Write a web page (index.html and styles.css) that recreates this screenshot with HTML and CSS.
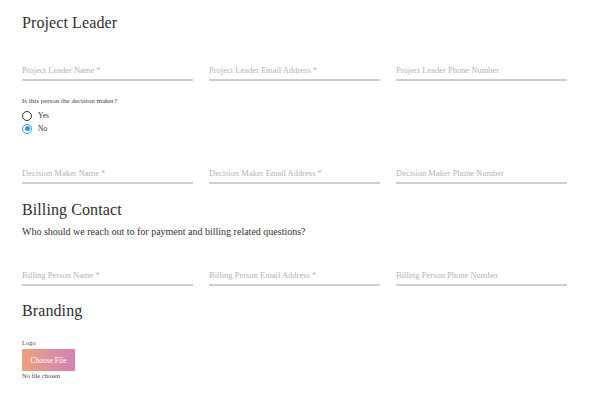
FILE: index.html
```html
<!DOCTYPE html>
<html lang="en">
<head>
<meta charset="utf-8">
<title>Project Form</title>
<link rel="stylesheet" href="styles.css">
</head>
<body>
<main class="page">
  <h2 class="section-title first">Project Leader</h2>
  <div class="field-row row-leader">
    <input class="field" type="text" placeholder="Project Leader Name *">
    <input class="field" type="email" placeholder="Project Leader Email Address *">
    <input class="field" type="tel" placeholder="Project Leader Phone Number">
  </div>
  <div class="question">
    <p class="question-label">Is this person the decision maker?</p>
    <label class="radio"><span class="radio-dot"></span>Yes</label>
    <label class="radio is-checked"><span class="radio-dot"></span>No</label>
  </div>
  <div class="field-row row-decision">
    <input class="field" type="text" placeholder="Decision Maker Name *">
    <input class="field" type="email" placeholder="Decision Maker Email Address *">
    <input class="field" type="tel" placeholder="Decision Maker Phone Number">
  </div>
  <h2 class="section-title billing">Billing Contact</h2>
  <p class="lead">Who should we reach out to for payment and billing related questions?</p>
  <div class="field-row row-billing">
    <input class="field" type="text" placeholder="Billing Person Name *">
    <input class="field" type="email" placeholder="Billing Person Email Address *">
    <input class="field" type="tel" placeholder="Billing Person Phone Number">
  </div>
  <h2 class="section-title branding">Branding</h2>
  <div class="upload">
    <span class="upload-label">Logo</span>
    <button class="file-btn" type="button">Choose File</button>
    <span class="file-status">No file chosen</span>
  </div>
</main>
</body>
</html>
```

FILE: styles.css
```css
html, body {
  margin: 0;
  padding: 0;
  background: #ffffff;
}

body {
  font-family: "Liberation Serif", "DejaVu Serif", serif;
  color: #333333;
}

.page {
  padding: 0 22px;
  display: flex;
  flex-direction: column;
  align-items: flex-start;
}

.section-title {
  margin: 0;
  font-size: 16px;
  font-weight: normal;
  line-height: 24px;
  color: #2f2f2f;
  letter-spacing: 0.1px;
}

.section-title.first { margin-top: 11px; }
.section-title.billing { margin-top: 14px; }
.section-title.branding { margin-top: 13px; }

.field-row {
  display: grid;
  grid-template-columns: repeat(3, 171px);
  column-gap: 16px;
}

.row-leader { margin-top: 24px; }
.row-decision { margin-top: 27px; }
.row-billing { margin-top: 25px; }

.field {
  box-sizing: border-box;
  height: 22px;
  width: 100%;
  margin: 0;
  padding: 2px 0 0 0;
  border: 0;
  border-bottom: 2px solid #cfcfcf;
  outline: none;
  background: transparent;
  font-family: inherit;
  font-size: 8.5px;
  color: #333;
}

.field::placeholder {
  color: #b3b3b3;
}

.question {
  margin-top: 15px;
  display: flex;
  flex-direction: column;
}

.question-label {
  margin: 0 0 3px 0;
  font-size: 7px;
  line-height: 10px;
  color: #444;
}

.radio {
  display: flex;
  align-items: center;
  gap: 6px;
  height: 13px;
  font-size: 7.5px;
  color: #333;
}

.radio-dot {
  box-sizing: border-box;
  width: 10px;
  height: 10px;
  border-radius: 50%;
  border: 1.3px solid #333;
  display: flex;
  align-items: center;
  justify-content: center;
}

.radio.is-checked .radio-dot {
  border-color: #2d9be0;
}

.radio.is-checked .radio-dot::after {
  content: "";
  width: 5px;
  height: 5px;
  border-radius: 50%;
  background: #2d9be0;
}

.lead {
  margin: 3px 0 0 0;
  font-size: 10px;
  line-height: 14px;
  color: #333;
}

.upload {
  margin-top: 15px;
  display: flex;
  flex-direction: column;
  align-items: flex-start;
}

.upload-label {
  font-size: 6.5px;
  line-height: 10px;
  color: #444;
}

.file-btn {
  margin-top: 1px;
  width: 53px;
  height: 22px;
  border: 0;
  border-radius: 1px;
  padding: 0;
  background: linear-gradient(90deg, #eba27c 0%, #dc8fa0 60%, #d181b6 100%);
  color: #ffffff;
  font-family: inherit;
  font-size: 7.5px;
}

.file-status {
  font-size: 6.5px;
  line-height: 10px;
  color: #444;
}
```
